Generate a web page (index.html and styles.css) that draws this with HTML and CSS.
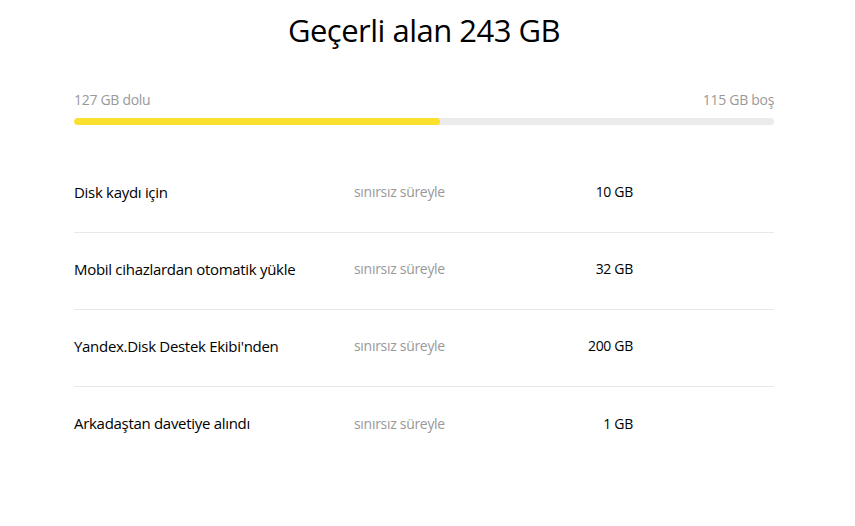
FILE: index.html
```html
<!DOCTYPE html>
<html lang="tr">
<head>
<meta charset="utf-8">
<link rel="stylesheet" href="styles.css">
</head>
<body>
<main class="page">
  <h1 class="title">Geçerli alan 243 GB</h1>
  <div class="usage">
    <div class="usage-labels">
      <span>127 GB dolu</span>
      <span>115 GB boş</span>
    </div>
    <div class="bar"><div class="bar-fill" style="width: 52.26%"></div></div>
  </div>
  <ul class="list">
    <li class="row"><span class="name">Disk kaydı için</span><span class="term">sınırsız süreyle</span><span class="size">10 GB</span></li>
    <li class="row"><span class="name">Mobil cihazlardan otomatik yükle</span><span class="term">sınırsız süreyle</span><span class="size">32 GB</span></li>
    <li class="row"><span class="name">Yandex.Disk Destek Ekibi'nden</span><span class="term">sınırsız süreyle</span><span class="size">200 GB</span></li>
    <li class="row"><span class="name">Arkadaştan davetiye alındı</span><span class="term">sınırsız süreyle</span><span class="size">1 GB</span></li>
  </ul>
</main>
</body>
</html>
```
FILE: styles.css
```css
* { box-sizing: border-box; }
html, body { margin: 0; padding: 0; background: #fff; }
body { font-family: "Open Sans", "Noto Sans", sans-serif; color: #000; }
.page { width: 700px; margin: 0 0 0 74px; }
.title {
  margin: 0;
  padding-top: 8px;
  height: 58px;
  text-align: center;
  font-weight: 400;
  font-size: 31px;
  line-height: 44px;
  letter-spacing: -0.5px;
  font-family: "Open Sans", sans-serif;
}
.usage { padding-top: 32px; }
.usage-labels {
  display: flex;
  justify-content: space-between;
  font-size: 14px;
  line-height: 20px;
  color: #999;
  letter-spacing: -0.3px;
}
.bar {
  margin-top: 8px;
  height: 7px;
  border-radius: 4px;
  background: #ebebeb;
  overflow: hidden;
}
.bar-fill { height: 100%; background: #fbe12e; border-radius: 4px; }
.list { list-style: none; margin: 31px 0 0; padding: 0; }
.row {
  display: grid;
  grid-template-columns: 280px 200px 79px;
  align-items: center;
  height: 77px;
  padding-bottom: 5px;
  border-bottom: 1px solid #e8e8e8;
  font-size: 15px;
  letter-spacing: -0.3px;
}
.row:last-child { border-bottom: none; }
.term { color: #999; font-size: 14px; }
.size { text-align: right; font-size: 14px; }
```
